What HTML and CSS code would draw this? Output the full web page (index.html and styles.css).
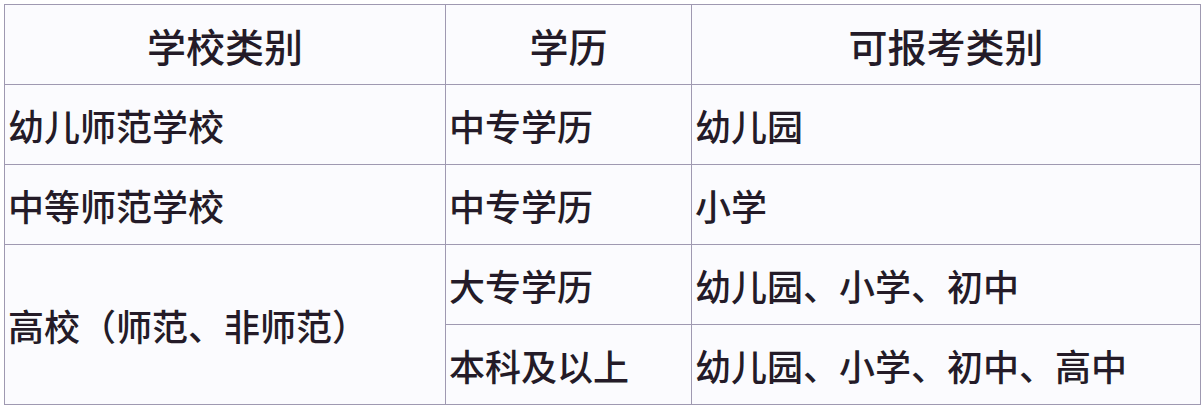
FILE: index.html
```html
<!DOCTYPE html>
<html lang="zh-CN">
<head>
<meta charset="utf-8">
<link rel="stylesheet" href="styles.css">
</head>
<body>
<table class="grid">
  <colgroup>
    <col class="c1"><col class="c2"><col class="c3">
  </colgroup>
  <thead>
    <tr><th>学校类别</th><th>学历</th><th>可报考类别</th></tr>
  </thead>
  <tbody>
    <tr><td>幼儿师范学校</td><td>中专学历</td><td>幼儿园</td></tr>
    <tr><td>中等师范学校</td><td>中专学历</td><td>小学</td></tr>
    <tr><td rowspan="2">高校（师范、非师范）</td><td>大专学历</td><td>幼儿园、小学、初中</td></tr>
    <tr><td>本科及以上</td><td>幼儿园、小学、初中、高中</td></tr>
  </tbody>
</table>
</body>
</html>
```

FILE: styles.css
```css
html, body {
  margin: 0;
  background: #ffffff;
}
body {
  padding: 4px 5px 6px 4px;
  font-family: "Noto Sans CJK SC", "Noto Sans", sans-serif;
  color: #241b28;
}
.grid {
  border-collapse: collapse;
  width: 1196px;
  table-layout: fixed;
  background: #fbfbfe;
  border: 1.5px solid #9d97ae;
}
.c1 { width: 441px; }
.c2 { width: 246px; }
.c3 { width: 509px; }
.grid th, .grid td {
  border: 1px solid #9f99b1;
  height: 79px;
  padding: 0 0 0 3px;
  font-size: 36px;
  line-height: 40px;
  font-weight: 500;
  vertical-align: middle;
  text-align: left;
  white-space: nowrap;
}
.grid th {
  text-align: center;
  padding: 0;
  font-size: 39px;
}
```
